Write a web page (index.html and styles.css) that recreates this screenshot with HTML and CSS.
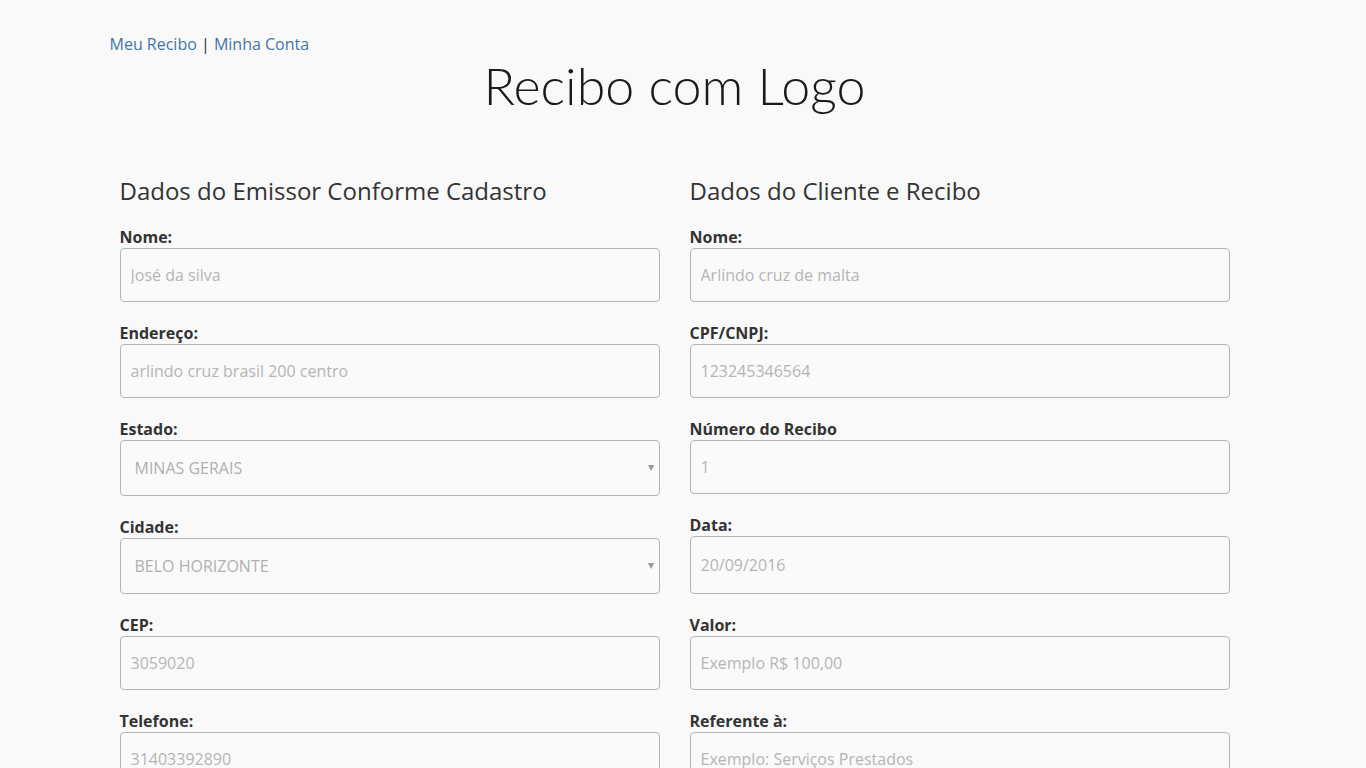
FILE: index.html
```html
<!DOCTYPE html>
<html lang="pt-BR">

<head>
  <meta charset="UTF-8">
  <meta name="viewport" content="width=device-width, initial-scale=1.0">
  <title>Recibo com Logo</title>
  <link rel="stylesheet" href="styles.css">
</head>

<body>
  <div class="container">
    <div class="top-links">
      <a href="#">Meu Recibo</a> | <a href="#">Minha Conta</a>
    </div>

    <h1 class="title">Recibo com Logo</h1>

    <form class="row">
      <div class="col">
        <h3>Dados do Emissor Conforme Cadastro</h3>

        <div class="form-group">
          <label for="emissor-nome">Nome:</label>
          <input class="input" id="emissor-nome" type="text" placeholder="José da silva">
        </div>
        <div class="form-group">
          <label for="emissor-endereco">Endereço:</label>
          <input class="input" id="emissor-endereco" type="text" placeholder="arlindo cruz brasil 200 centro">
        </div>
        <div class="form-group">
          <label for="emissor-estado">Estado:</label>
          <div class="select-wrap">
            <select class="input select" id="emissor-estado">
              <option>MINAS GERAIS</option>
            </select>
          </div>
        </div>
        <div class="form-group">
          <label for="emissor-cidade">Cidade:</label>
          <div class="select-wrap">
            <select class="input select" id="emissor-cidade">
              <option>BELO HORIZONTE</option>
            </select>
          </div>
        </div>
        <div class="form-group">
          <label for="emissor-cep">CEP:</label>
          <input class="input" id="emissor-cep" type="text" placeholder="3059020">
        </div>
        <div class="form-group">
          <label for="emissor-telefone">Telefone:</label>
          <input class="input" id="emissor-telefone" type="text" placeholder="31403392890">
        </div>
        <div class="form-group">
          <label for="emissor-logo">Logo:</label>
          <input class="input" id="emissor-logo" type="text" placeholder="logo.png">
        </div>
      </div>

      <div class="col">
        <h3>Dados do Cliente e Recibo</h3>

        <div class="form-group">
          <label for="cliente-nome">Nome:</label>
          <input class="input" id="cliente-nome" type="text" placeholder="Arlindo cruz de malta">
        </div>
        <div class="form-group">
          <label for="cliente-doc">CPF/CNPJ:</label>
          <input class="input" id="cliente-doc" type="text" placeholder="123245346564">
        </div>
        <div class="form-group">
          <label for="recibo-numero">Número do Recibo</label>
          <input class="input" id="recibo-numero" type="text" placeholder="1">
        </div>
        <div class="form-group">
          <label for="recibo-data">Data:</label>
          <input class="input date" id="recibo-data" type="text" placeholder="20/09/2016">
        </div>
        <div class="form-group">
          <label for="recibo-valor">Valor:</label>
          <input class="input" id="recibo-valor" type="text" placeholder="Exemplo R$ 100,00">
        </div>
        <div class="form-group">
          <label for="recibo-referente">Referente à:</label>
          <input class="input" id="recibo-referente" type="text" placeholder="Exemplo: Serviços Prestados">
        </div>
        <div class="form-group">
          <button class="button" type="button">Gerar Recibo</button>
        </div>
      </div>
    </form>
  </div>
</body>

</html>
```

FILE: styles.css
```css
html {
  background-color: #f9f9f9;
}

body {
  margin: 0;
  padding-right: 17px;
  font-family: 'Open Sans', 'Noto Sans', sans-serif;
  font-size: 16px;
  color: #333;
  background-color: #f9f9f9;
}

.container {
  width: 1140px;
  margin: 0 auto;
  padding: 34px 0 480px;
}

.top-links {
  padding-left: 5px;
  line-height: 20px;
  color: #333;
}

.top-links a {
  color: #4374a9;
  text-decoration: none;
}

.title {
  margin: -1px 0 59px;
  font-family: 'Lato', 'Open Sans', sans-serif;
  font-weight: 300;
  font-size: 52px;
  line-height: 64px;
  text-align: center;
  color: #1a1a1a;
}

.row {
  display: flex;
}

.col {
  width: 570px;
  padding: 0 15px;
  box-sizing: border-box;
}

h3 {
  margin: 0 0 21px;
  font-weight: 400;
  font-size: 24px;
  line-height: 29px;
  color: #333;
}

.form-group {
  margin-bottom: 20px;
}

label {
  display: block;
  margin-bottom: 0;
  font-weight: bold;
  font-size: 16px;
  line-height: 22px;
  color: #333;
}

.input {
  display: block;
  width: 100%;
  height: 54px;
  box-sizing: border-box;
  padding: 0 10px;
  font-family: 'Open Sans', 'Noto Sans', sans-serif;
  font-size: 16px;
  color: #b0b0b0;
  background-color: #fafafa;
  border: 1px solid #b5b5b5;
  border-radius: 4px;
}

.input::placeholder {
  color: #b5b5b5;
}

.input.date {
  height: 58px;
}

.select-wrap {
  position: relative;
}

.select {
  height: 56px;
  padding: 0 14px;
  appearance: none;
  -webkit-appearance: none;
}

.select-wrap::after {
  content: '\25BE';
  position: absolute;
  right: 6px;
  top: 18px;
  font-size: 12px;
  color: #999;
  pointer-events: none;
}

.button {
  padding: 12px 20px;
  color: #fff;
  background-color: #4374a9;
  border: 0;
  border-radius: 4px;
  font-family: 'Open Sans', sans-serif;
  font-size: 16px;
  font-weight: bold;
}
```
